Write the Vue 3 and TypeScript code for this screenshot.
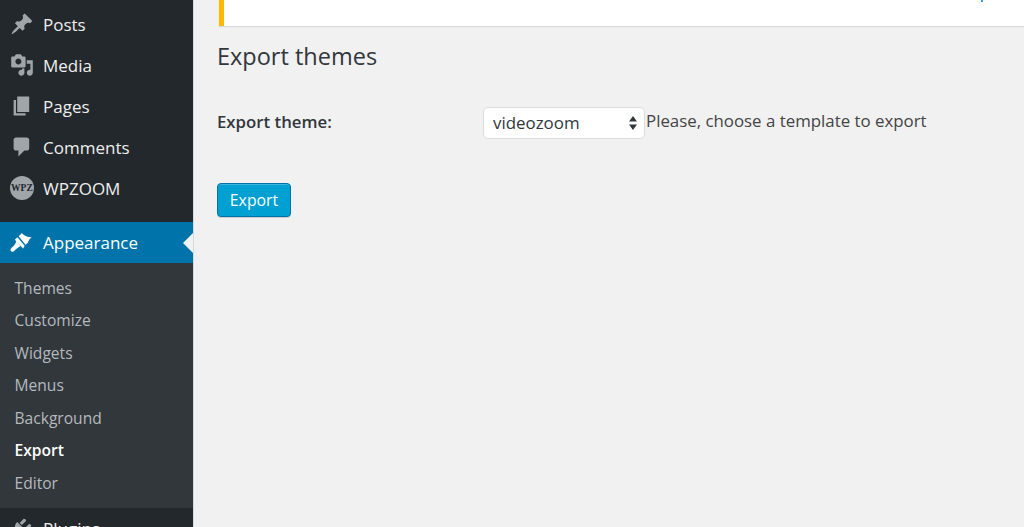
<script setup lang="ts">
interface Item { label: string; d: string }
const d = {
  post: 'M10.44 3.02l1.82-1.82 6.36 6.35-1.83 1.82c-1.05-.68-2.48-.57-3.41.36l-.75.75c-.92.93-1.04 2.35-.35 3.41l-1.83 1.82-2.41-2.41-2.8 2.79c-.42.42-3.38 2.71-3.8 2.29s1.86-3.39 2.28-3.81l2.79-2.79L4.1 9.36l1.83-1.82c1.05.69 2.48.57 3.41-.36l.75-.75c.93-.92 1.04-2.35.35-3.41z',
  media: 'M13 11V4c0-.55-.45-1-1-1h-1.67L9 1H5L3.67 3H2c-.55 0-1 .45-1 1v7c0 .55.45 1 1 1h10c.55 0 1-.45 1-1zM7 4.5c1.38 0 2.5 1.12 2.5 2.5S8.38 9.5 7 9.5 4.5 8.38 4.5 7 5.62 4.5 7 4.5zM14 6h5v10.5c0 1.38-1.12 2.5-2.5 2.5S14 17.88 14 16.5s1.12-2.5 2.5-2.5c.17 0 .34.02.5.05V9h-3V6zm-4 8.05V13h2v3.5c0 1.38-1.12 2.5-2.5 2.5S7 17.88 7 16.5 8.12 14 9.5 14c.17 0 .34.02.5.05z',
  page: 'M6 15V2h10v13H6zm-1 1h8v2H3V5h2v11z',
  comment: 'M5 2h9c1.1 0 2 .9 2 2v7c0 1.1-.9 2-2 2h-2l-5 5v-5H5c-1.1 0-2-.9-2-2V4c0-1.1.9-2 2-2z',
  appearance: 'M7.200 4.400L9.800 1.800C11.500 3.600 14 5.200 18 5.200 16.400 6.600 15.200 8 15 9.600L13 11.400zM6.200 5.200L12.200 12.200 11 14.600 4 7.200zM5.200 8.600L8.800 12.400C7.600 13 6.200 14 5 15.200L3.200 16.800C2.400 17.500 1 17.400 .6 16.600 .2 15.900 .4 15 1.200 14.200L3 12.500C4 11.400 4.800 10 5.200 8.600z',
  plugin: 'M13.11 4.36L9.87 7.6 8 5.73l3.24-3.24c.35-.34 1.05-.2 1.56.32.52.51.66 1.21.31 1.55zm-8 1.77l.91-1.12 9.01 9.01-1.19.84c-.71.71-2.63 1.16-3.82 1.16H6.14L4.9 17.26c-.59.59-1.54.59-2.12 0-.59-.58-.59-1.53 0-2.12l1.24-1.24v-3.88c0-1.13.4-3.19 1.09-3.89zm7.26 3.97l3.24-3.24c.34-.35 1.04-.21 1.55.31.52.51.66 1.21.31 1.55l-3.24 3.25z',
}
const topItems: Item[] = [
  { label: 'Posts', d: d.post },
  { label: 'Media', d: d.media },
  { label: 'Pages', d: d.page },
  { label: 'Comments', d: d.comment },
]
const subItems = ['Themes', 'Customize', 'Widgets', 'Menus', 'Background', 'Export', 'Editor']
</script>

<template>
  <div class="page">
    <aside class="side">
      <nav class="top">
        <a v-for="it in topItems" :key="it.label" class="item">
          <svg class="ico" viewBox="0 0 20 20"><path :d="it.d" /></svg>
          <span>{{ it.label }}</span>
        </a>
        <a class="item">
          <span class="wpz">WPZ</span>
          <span>WPZOOM</span>
        </a>
      </nav>
      <a class="item active">
        <svg class="ico" viewBox="0 0 20 20"><path :d="d.appearance" /></svg>
        <span>Appearance</span>
      </a>
      <ul class="sub">
        <li v-for="s in subItems" :key="s" :class="{ cur: s === 'Export' }">{{ s }}</li>
      </ul>
      <a class="item">
        <svg class="ico" viewBox="0 0 20 20"><path :d="d.plugin" /></svg>
        <span>Plugins</span>
      </a>
    </aside>
    <main class="main">
      <div class="notice"><i class="speck"></i></div>
      <h1>Export themes</h1>
      <div class="row">
        <label class="lbl" for="t">Export theme:</label>
        <div class="field">
          <span class="selwrap">
            <select id="t" class="sel"><option>videozoom</option></select>
            <svg class="arrows" viewBox="0 0 8 14"><path d="M4 0l4 5.500H0zM4 14L0 8.500h8z" /></svg>
          </span>
          <span class="hint">Please, choose a template to export</span>
        </div>
      </div>
      <button class="btn" type="button">Export</button>
    </main>
  </div>
</template>

<style>
html, body { margin: 0; height: 100%; overflow: hidden; background: #f1f1f1; }
</style>

<style scoped>
.page {
  display: flex;
  height: 527px;
  overflow: hidden;
  font-family: "Open Sans", "Noto Sans", sans-serif;
  background: #f1f1f1;
}
.side {
  width: 192.500px;
  flex: none;
  background: #23282d;
  overflow: hidden;
  box-shadow: 1px 0 0 #d8d8d8;
}
.top { padding-top: 3.500px; padding-bottom: 13.500px; }
.item {
  display: flex;
  align-items: center;
  height: 41px;
  padding-left: 10px;
  gap: 9px;
  font-size: 17px;
  color: #eeeeee;
  position: relative;
}
.ico { width: 24px; height: 24px; flex: none; fill: #a0a5aa; }
.wpz {
  width: 24px;
  height: 24px;
  flex: none;
  border-radius: 50%;
  background: #a0a5aa;
  color: #23282d;
  font: bold 9.500px/24px "Liberation Serif", serif;
  text-align: center;
  letter-spacing: 0.2px;
}
.active { background: #0073aa; color: #fff; }
.active .ico { fill: #fff; }
.active::after {
  content: "";
  position: absolute;
  right: 0;
  top: 50%;
  margin-top: -10px;
  border: 10px solid transparent;
  border-left: 0;
  border-right-color: #f1f1f1;
}
.sub {
  list-style: none;
  margin: 0;
  padding: 8.500px 0 8.500px 14.500px;
  background: #32373c;
  color: #b4b9be;
  font-size: 15.600px;
}
.sub li { height: 32.500px; line-height: 32.500px; }
.sub .cur { color: #fff; font-weight: 600; }
.main { flex: 1; padding-left: 24.500px; min-width: 0; }
.notice {
  position: relative;
  height: 26px;
  margin-left: 2px;
  background: #fff;
  border-left: 5px solid #ffb900;
  box-shadow: 0 1px 1px rgba(0, 0, 0, 0.1);
}
.speck {
  position: absolute;
  left: 757px;
  top: 0;
  width: 2px;
  height: 2px;
  background: #3a9fd8;
}
h1 {
  margin: 14px 0 0;
  font-size: 23.500px;
  font-weight: 400;
  line-height: 32px;
  color: #32373c;
}
.row { display: flex; align-items: center; margin-top: 35px; }
.lbl { width: 266px; flex: none; font-size: 16.800px; font-weight: 600; color: #32373c; margin-bottom: 4px; }
.field { display: flex; align-items: center; }
.selwrap { position: relative; display: block; width: 162px; height: 32px; }
.sel {
  appearance: none;
  -webkit-appearance: none;
  display: block;
  box-sizing: border-box;
  width: 100%;
  height: 100%;
  padding: 0 0 2px 9px;
  background: #fff;
  border: 1px solid #ddd;
  border-radius: 5px;
  font: 16.900px "Open Sans", sans-serif;
  color: #32373c;
}
.arrows {
  position: absolute;
  right: 8px;
  top: 9px;
  width: 8px;
  height: 14px;
  fill: #32373c;
}
.hint { margin-left: 1px; font-size: 16.850px; color: #444; margin-bottom: 6px; }
.btn {
  display: block;
  box-sizing: border-box;
  width: 74px;
  height: 34px;
  margin-top: 44px;
  padding: 0;
  background: #00a0d2;
  border: 1px solid #0073aa;
  border-radius: 4px;
  color: #fff;
  font: 15.800px "Open Sans", sans-serif;
  box-shadow: inset 0 1px 0 rgba(120, 200, 230, 0.5), 0 1px 0 rgba(0, 0, 0, 0.15);
}
</style>
